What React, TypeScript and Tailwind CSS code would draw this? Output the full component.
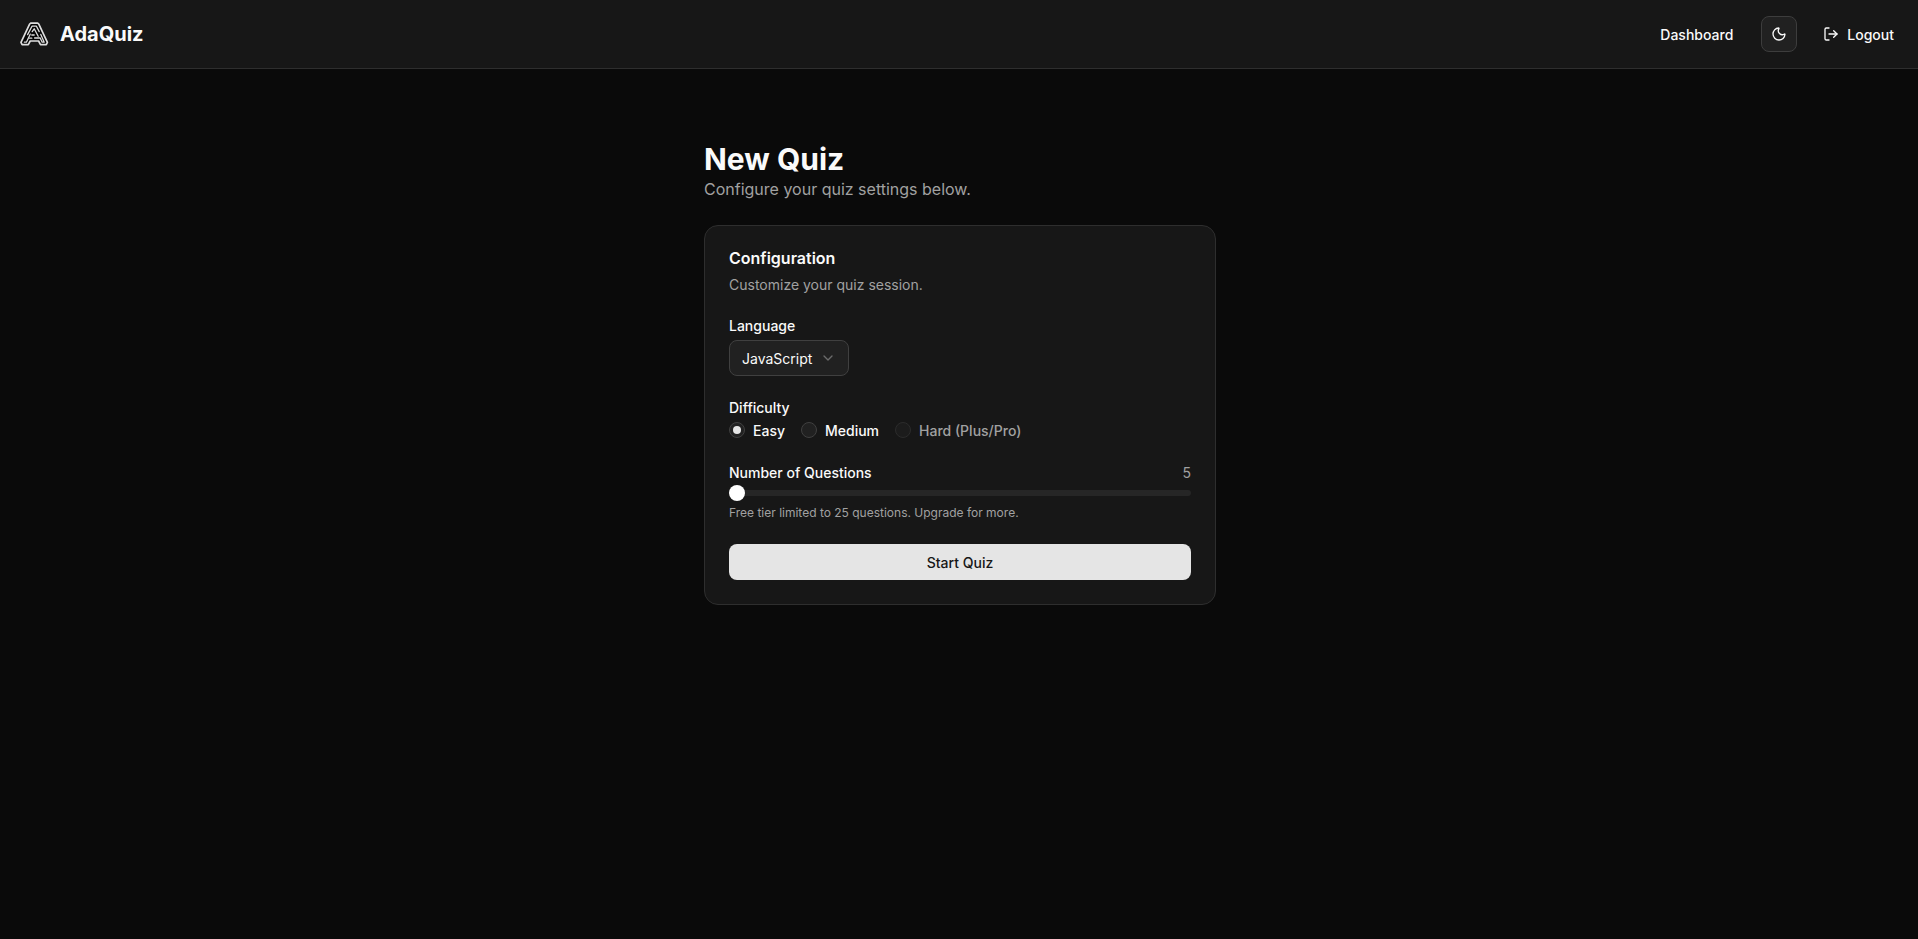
import { useState } from "react";
import { ChevronDown, LogOut, Moon } from "lucide-react";
import clsx from "clsx";

type Difficulty = "easy" | "medium" | "hard";

const difficulties: { value: Difficulty; label: string; locked?: boolean }[] = [
	{ value: "easy", label: "Easy" },
	{ value: "medium", label: "Medium" },
	{ value: "hard", label: "Hard (Plus/Pro)", locked: true },
];

function Logo() {
	return (
		<svg
			className="h-6 w-[30px]"
			viewBox="0 0 30 24"
			fill="none"
			stroke="#dedede"
			strokeLinejoin="round"
			strokeLinecap="round"
		>
			{/* outer contour */}
			<path
				d="M11.7 1.2h7l1.1.9L28.4 20.4l-1.1 2.3h-5.8l-1.9-3.7h-8.4l-1.9 3.7H3.1L2 20.4l8.6-18.3z"
				fill="#050505"
				strokeWidth="1.7"
			/>
			{/* inner maze strokes */}
			<path d="M5.4 20.2h2l3.8-8M8.6 12.6 13 4.2h4.4l2.8 5.4" strokeWidth="1.3" />
			<path d="m21.8 12.4 3.4 7.8h-2l-2-4.2h-5.6" strokeWidth="1.3" />
			<path d="m13.2 9.6 2-2.8 4 7.4" strokeWidth="1.3" />
			<path d="M10.6 16.2h2.2M12.8 13h2.4" strokeWidth="1.3" />
		</svg>
	);
}

function Header() {
	return (
		<header className="flex items-center justify-between border-b border-[#2e2e2e] bg-[#171717] py-4 pr-3.5 pl-[19px]">
			<div className="flex items-center gap-[11px]">
				<Logo />
				<span className="text-xl font-bold">AdaQuiz</span>
			</div>
			<nav className="flex items-center gap-4 text-sm font-medium">
				<a href="#" className="px-3 pt-0.5">
					Dashboard
				</a>
				<button
					type="button"
					className="flex size-9 items-center justify-center rounded-lg border border-[#3d3d3d] bg-[#212121]"
				>
					<Moon className="size-4" />
				</button>
				<button type="button" className="flex h-9 items-center gap-2 px-2.5">
					<LogOut className="size-4" />
					<span className="pt-0.5">Logout</span>
				</button>
			</nav>
		</header>
	);
}

export default function App() {
	const [difficulty, setDifficulty] = useState<Difficulty>("easy");
	const [count] = useState(5);

	return (
		<div className="min-h-screen bg-[#0a0a0a] font-['Inter',sans-serif] text-neutral-50">
			<Header />
			<main className="flex justify-center pt-[72px] pl-0.5">
				<div className="w-lg">
					<h1 className="text-3xl font-bold">New Quiz</h1>
					<p className="text-[#a1a1a1]">Configure your quiz settings below.</p>

					<section className="mt-6 flex flex-col gap-6 rounded-[14px] border border-[#2e2e2e] bg-[#171717] p-6">
						<div className="flex flex-col gap-2">
							<h2 className="leading-none font-semibold">Configuration</h2>
							<p className="-mb-px text-sm leading-[21px] text-[#a1a1a1]">
								Customize your quiz session.
							</p>
						</div>

						<div className="flex flex-col items-start gap-2">
							<label className="-mb-px text-sm leading-[15px] font-medium">
								Language
							</label>
							<button
								type="button"
								className="flex h-9 items-center gap-2 rounded-lg border border-[#404040] bg-[#212121] px-3 text-sm"
							>
								<span className="pt-0.5">JavaScript</span>
								<ChevronDown className="size-4 text-[#6b6b6b]" />
							</button>
						</div>

						<div className="flex flex-col gap-2">
							<span className="-mb-px text-sm leading-[15px] font-medium">
								Difficulty
							</span>
							<div className="flex gap-4">
								{difficulties.map(({ value, label, locked }) => (
									<button
										key={value}
										type="button"
										disabled={locked}
										onClick={() => setDifficulty(value)}
										className="flex items-center gap-2 text-sm leading-none font-medium"
									>
										<span
											className={clsx(
												"flex size-4 items-center justify-center rounded-full border border-[#404040] bg-[#212121]",
												locked && "opacity-50",
											)}
										>
											{difficulty === value && (
												<span className="size-2 rounded-full bg-neutral-200" />
											)}
										</span>
										<span
											className={clsx("pt-0.5", locked && "text-[#a1a1a1]")}
										>
											{label}
										</span>
									</button>
								))}
							</div>
						</div>

						<div className="flex flex-col gap-2">
							<div className="-mb-px flex items-center justify-between text-sm leading-[21px]">
								<span className="font-medium">Number of Questions</span>
								<span className="text-[#a1a1a1]">{count}</span>
							</div>
							<div className="flex h-1.5 items-center rounded-full bg-neutral-800">
								<span className="size-4 shrink-0 rounded-full bg-white" />
							</div>
							<p className="-mb-px text-xs leading-[17px] text-[#a1a1a1]">
								Free tier limited to 25 questions. Upgrade for more.
							</p>
						</div>

						<button
							type="button"
							className="h-9 rounded-lg bg-neutral-200 pt-0.5 text-sm font-medium text-neutral-900"
						>
							Start Quiz
						</button>
					</section>
				</div>
			</main>
		</div>
	);
}
